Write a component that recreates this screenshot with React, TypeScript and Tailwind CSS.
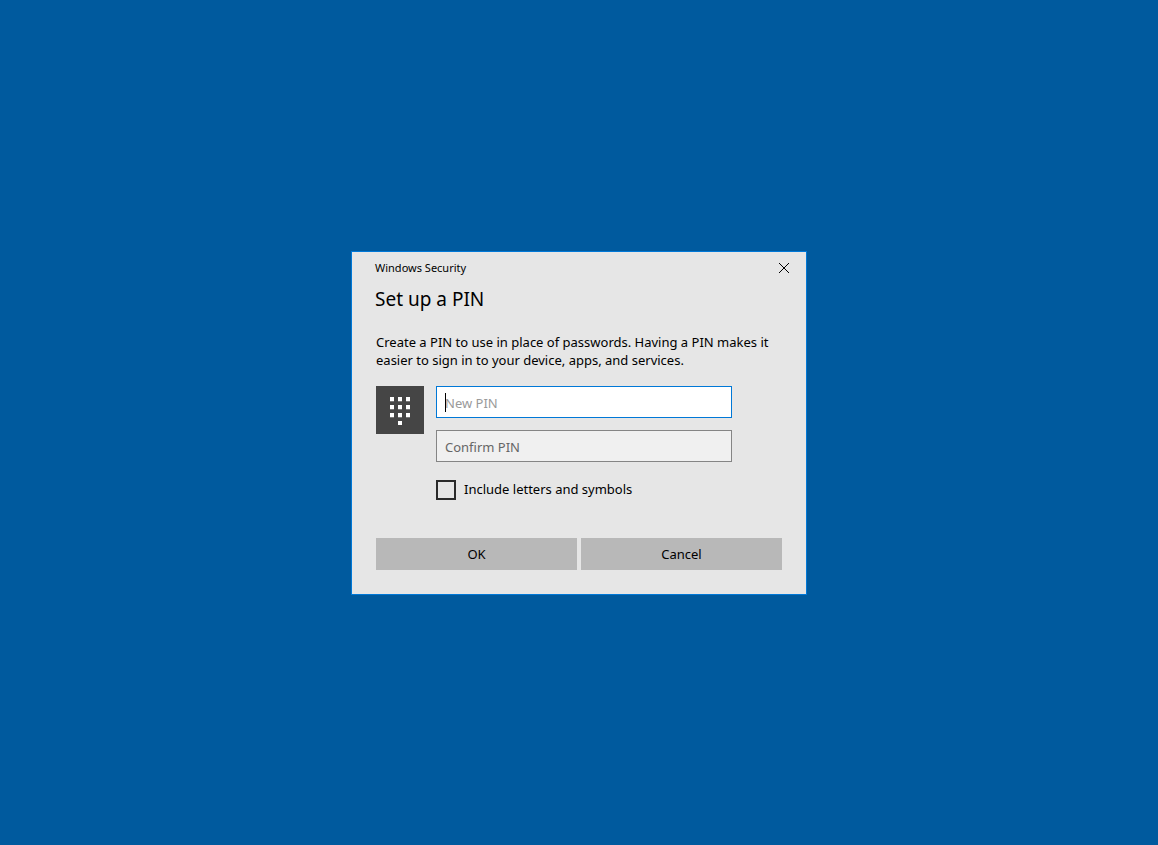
import { useState } from "react";

const keypad = [
  [0, 0], [8, 0], [16, 0],
  [0, 8], [8, 8], [16, 8],
  [0, 16], [8, 16], [16, 16],
  [8, 24],
];

function KeypadIcon() {
  return (
    <div className="flex size-12 shrink-0 items-center justify-center bg-[#454545]">
      <svg width="20" height="30" viewBox="0 -2 20 30" shapeRendering="crispEdges" aria-hidden="true">
        {keypad.map(([x, y]) => (
          <g key={`${x}-${y}`}>
            <rect x={x} y={y} width="4" height="4" fill="#fff" />
            <rect x={x} y={y + 4} width="4" height="1" fill="#777" />
          </g>
        ))}
      </svg>
    </div>
  );
}

export default function App() {
  const [pin, setPin] = useState("");
  const [confirm, setConfirm] = useState("");
  const [symbols, setSymbols] = useState(false);

  return (
    <main className="flex min-h-screen items-center justify-center bg-[#005a9e] pt-px font-['Noto_Sans','Open_Sans',sans-serif] text-[13px] text-black">
      <form
        role="dialog"
        aria-labelledby="dialog-title"
        onSubmit={(e) => e.preventDefault()}
        className="w-full max-w-[456px] border border-[#0078d7] bg-[#e6e6e6] pb-6"
      >
        <header className="flex h-8 items-center justify-between pl-[23px]">
          <span className="text-[11px]">Windows Security</span>
          <button type="button" aria-label="Close" className="flex h-8 w-11 items-center justify-center">
            <svg width="10" height="10" viewBox="0 0 10 10" stroke="#000" strokeWidth="1" aria-hidden="true">
              <path d="M0 0L10 10M10 0L0 10" />
            </svg>
          </button>
        </header>

        <h1 id="dialog-title" className="pl-[23px] text-[19px] leading-[30px]">
          Set up a PIN
        </h1>

        <div className="px-6 pt-[19px]">
          <p className="leading-[18px]">
            Create a PIN to use in place of passwords. Having a PIN makes it easier to sign in to your device,
            apps, and services.
          </p>

          <div className="mt-[17px] flex gap-3">
            <KeypadIcon />
            <div className="flex w-[296px] flex-col">
              <div className="relative">
                <input
                  type="password"
                  aria-label="New PIN"
                  placeholder="New PIN"
                  value={pin}
                  onChange={(e) => setPin(e.target.value)}
                  className="block h-8 w-full border border-[#0078d7] bg-white px-2 pt-0.5 outline-none placeholder:text-[#9a9a9a]"
                />
                {pin === "" && <span className="absolute top-[7px] left-[9px] h-[19px] w-px bg-black" />}
              </div>
              <input
                type="password"
                aria-label="Confirm PIN"
                placeholder="Confirm PIN"
                value={confirm}
                onChange={(e) => setConfirm(e.target.value)}
                className="mt-3 block h-8 w-full border border-[#858585] bg-[#f0f0f0] px-2 pt-0.5 outline-none placeholder:text-[#666666]"
              />
              <label className="mt-[18px] flex items-center gap-2">
                <input
                  type="checkbox"
                  checked={symbols}
                  onChange={(e) => setSymbols(e.target.checked)}
                  className="size-5 appearance-none border-2 border-[#2b2b2b] checked:bg-[#0078d7]"
                />
                Include letters and symbols
              </label>
            </div>
          </div>

          <div className="mt-[38px] grid grid-cols-2 gap-1">
            <button type="submit" className="h-8 bg-[#b8b8b8] pt-0.5">
              OK
            </button>
            <button type="button" className="h-8 bg-[#b8b8b8] pt-0.5">
              Cancel
            </button>
          </div>
        </div>
      </form>
    </main>
  );
}
